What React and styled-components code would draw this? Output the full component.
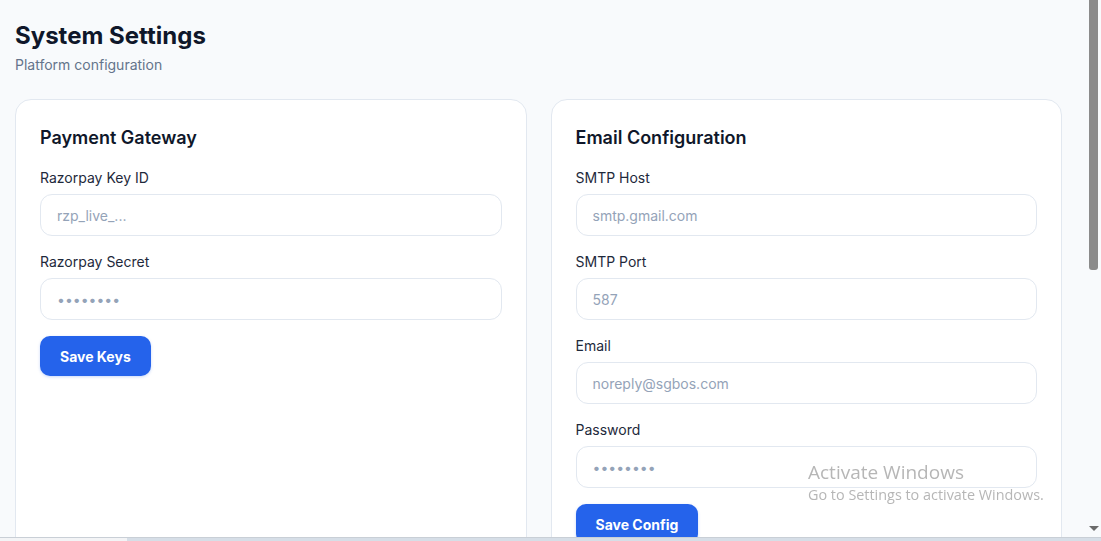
import styled, { createGlobalStyle } from 'styled-components';

const GlobalStyle = createGlobalStyle`
  * { box-sizing: border-box; }
  html, body {
    margin: 0;
    padding: 0;
    background: #f8fafc;
    font-family: Inter, "Noto Sans", sans-serif;
    color: #0f172a;
  }
`;

const Page = styled.main`
  padding: 20px 39px 470px 15px;
`;

const Header = styled.header`
  margin-bottom: 24px;
`;

const Title = styled.h1`
  font-size: 24px;
  line-height: 32px;
  font-weight: 700;
  margin: 0 0 3px;
  color: #0f172a;
`;

const Subtitle = styled.p`
  font-size: 14px;
  line-height: 20px;
  color: #64748b;
  margin: 0;
`;

const Grid = styled.div`
  display: grid;
  grid-template-columns: repeat(2, 1fr);
  gap: 24px;
`;

const Card = styled.section`
  background: #ffffff;
  border: 1px solid #e2e8f0;
  border-radius: 16px;
  padding: 24px;
  display: flex;
  flex-direction: column;
  align-items: flex-start;
  gap: 16px;
`;

const CardTitle = styled.h2`
  font-size: 18px;
  line-height: 28px;
  font-weight: 600;
  margin: 0;
  color: #0f172a;
`;

const Field = styled.label`
  display: flex;
  flex-direction: column;
  gap: 6px;
  width: 100%;
`;

const Label = styled.span`
  font-size: 14px;
  line-height: 20px;
  font-weight: 400;
  color: #1e293b;
`;

const Input = styled.input`
  width: 100%;
  height: 42px;
  border: 1px solid #e2e8f0;
  border-radius: 12px;
  padding: 0 16px;
  font-family: inherit;
  font-size: 14px;
  color: #0f172a;
  background: #fff;
  outline: none;

  &::placeholder {
    color: #94a3b8;
  }
`;

const Button = styled.button`
  height: 40px;
  padding: 0 20px;
  border: none;
  border-radius: 10px;
  background: #2563eb;
  color: #fff;
  font-family: inherit;
  font-size: 14px;
  font-weight: 700;
  cursor: pointer;
  box-shadow: 0 1px 3px rgba(37, 99, 235, 0.25);
`;

/* stand-in for the browser's classic scrollbar */
const Scrollbar = styled.div`
  position: fixed;
  top: 0;
  right: 0;
  bottom: 0;
  width: 15px;
  background: #f8fafc;
  display: flex;
  flex-direction: column;
  align-items: center;
  justify-content: space-between;
  padding-bottom: 10px;
`;

const Thumb = styled.div`
  width: 9px;
  height: 270px;
  margin-left: -1px;
  background: #8b8b8b;
  border-radius: 0 0 3px 3px;
`;

const DownArrow = styled.div`
  width: 0;
  height: 0;
  border-left: 5px solid transparent;
  border-right: 5px solid transparent;
  border-top: 5px solid #6b6b6b;
`;

const Watermark = styled.div`
  position: fixed;
  left: 808px;
  top: 459px;
  color: rgba(110, 110, 110, 0.5);
  font-family: "Open Sans", "Noto Sans", sans-serif;
  pointer-events: none;
`;

const WatermarkTitle = styled.div`
  font-size: 19px;
  line-height: 26px;
`;

const WatermarkText = styled.div`
  font-size: 14.4px;
  line-height: 20px;
`;

const Taskbar = styled.div`
  position: fixed;
  left: 0;
  right: 0;
  bottom: 0;
  height: 4px;
  display: flex;
  border-top: 1px solid #c9cfd6;
`;

const TaskbarSegment = styled.div`
  width: ${p => p.$width || 'auto'};
  flex: ${p => (p.$width ? 'none' : '1')};
  background: ${p => p.$bg};
`;

const paymentFields = [
  { label: 'Razorpay Key ID', placeholder: 'rzp_live_...' },
  { label: 'Razorpay Secret', placeholder: '••••••••', type: 'password' },
];

const emailFields = [
  { label: 'SMTP Host', placeholder: 'smtp.gmail.com' },
  { label: 'SMTP Port', placeholder: '587' },
  { label: 'Email', placeholder: 'noreply@sgbos.com' },
  { label: 'Password', placeholder: '••••••••', type: 'password' },
];

function SettingsCard({ title, fields, action }) {
  return (
    <Card>
      <CardTitle>{title}</CardTitle>
      {fields.map(f => (
        <Field key={f.label}>
          <Label>{f.label}</Label>
          <Input type={f.type || 'text'} placeholder={f.placeholder} />
        </Field>
      ))}
      <Button>{action}</Button>
    </Card>
  );
}

export default function App() {
  return (
    <>
      <GlobalStyle />
      <Page>
        <Header>
          <Title>System Settings</Title>
          <Subtitle>Platform configuration</Subtitle>
        </Header>
        <Grid>
          <SettingsCard title="Payment Gateway" fields={paymentFields} action="Save Keys" />
          <SettingsCard title="Email Configuration" fields={emailFields} action="Save Config" />
        </Grid>
      </Page>
      <Scrollbar>
        <Thumb />
        <DownArrow />
      </Scrollbar>
      <Watermark>
        <WatermarkTitle>Activate Windows</WatermarkTitle>
        <WatermarkText>Go to Settings to activate Windows.</WatermarkText>
      </Watermark>
      <Taskbar>
        <TaskbarSegment $width="127px" $bg="#f3f4f6" />
        <TaskbarSegment $bg="#d6dee7" />
      </Taskbar>
    </>
  );
}
